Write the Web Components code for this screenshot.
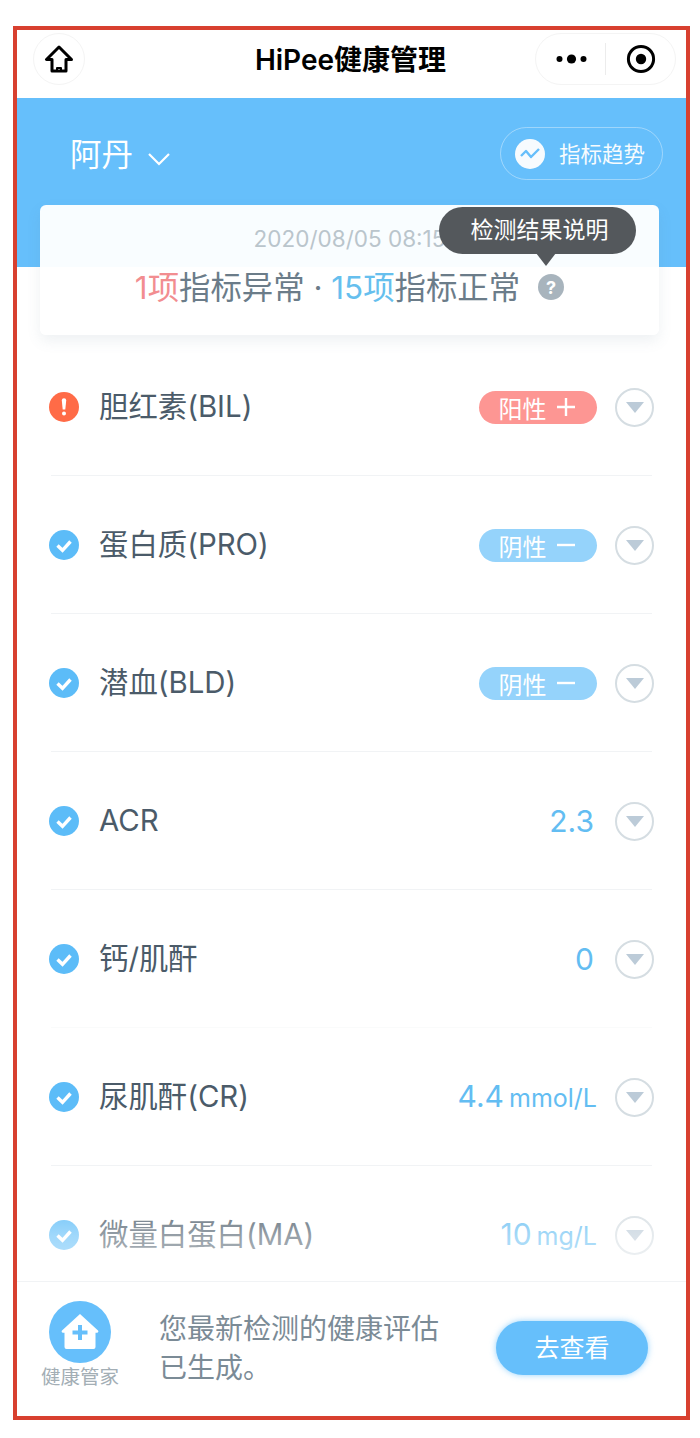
<!DOCTYPE html>
<html lang="zh">
<head>
<meta charset="utf-8">
<title>HiPee健康管理</title>
<style>
html, body { margin: 0; background: #fff; }
body { font-family: Inter, "Noto Sans CJK SC", sans-serif; }
</style>
</head>
<body>
<app-frame>
    <nav-bar slot="top" title-text="HiPee健康管理"></nav-bar>
    <report-hero slot="top" person="阿丹" date="2020/08/05 08:15"></report-hero>

    <indicator-row status="warn" name="胆红素(BIL)"><result-pill kind="pos">阳性</result-pill></indicator-row>
    <indicator-row status="ok" name="蛋白质(PRO)"><result-pill kind="neg">阴性</result-pill></indicator-row>
    <indicator-row status="ok" name="潜血(BLD)"><result-pill kind="neg">阴性</result-pill></indicator-row>
    <indicator-row status="ok" name="ACR" value="2.3"></indicator-row>
    <indicator-row status="ok" name="钙/肌酐" value="0" faint></indicator-row>
    <indicator-row status="ok" name="尿肌酐(CR)" value="4.4" unit="mmol/L"></indicator-row>
    <indicator-row status="ok" name="微量白蛋白(MA)" value="10" unit="mg/L"></indicator-row>

    <report-footer slot="bottom">您最新检测的健康评估<br>已生成。</report-footer>
</app-frame>

<script>
class AppFrame extends HTMLElement {
    constructor() {
        super();
        this.attachShadow({mode: 'open'}).innerHTML = `
<style>
:host {
    display: flex;
    flex-direction: column;
    box-sizing: border-box;
    width: 677px;
    height: 1394px;
    margin: 26px 0 0 13px;
    border: 4px solid #d8402f;
    background: #fff;
    overflow: hidden;
}
.list {
    flex: 1;
    min-height: 0;
    margin-top: 3px;
    overflow: hidden;
    position: relative;
}
/* rows fade out just above the footer */
.fade {
    position: absolute;
    left: 0;
    right: 0;
    bottom: 0;
    height: 90px;
    background: linear-gradient(rgba(255,255,255,0), rgba(255,255,255,.42) 50%, rgba(255,255,255,.65));
    pointer-events: none;
}
</style>
<slot name="top"></slot>
<div class="list"><slot></slot><div class="fade"></div></div>
<slot name="bottom"></slot>`;
    }
}

class NavBar extends HTMLElement {
    connectedCallback() {
        if (this.shadowRoot) return;
        this.attachShadow({mode: 'open'}).innerHTML = `
<style>
:host {
    display: grid;
    grid-template-columns: 1fr auto 1fr;
    align-items: center;
    height: 68px;
    padding: 0 10px 10px 16px;
    box-sizing: border-box;
    color: #000;
}
.home {
    width: 52px;
    height: 52px;
    box-sizing: border-box;
    border: 1px solid #f4f4f4;
    border-radius: 50%;
    display: flex;
    align-items: center;
    justify-content: center;
}
.title { font-size: 28px; font-weight: 600; white-space: nowrap; padding: 0 8px 3px 0; }
.capsule {
    justify-self: end;
    width: 141px;
    height: 52px;
    box-sizing: border-box;
    border: 1px solid #f4f4f4;
    border-radius: 26px;
    display: flex;
    align-items: center;
}
.capsule > div { flex: 1; display: flex; align-items: center; justify-content: center; }
.line { width: 1px; height: 32px; background: #ececec; flex: none !important; }
</style>
<div><div class="home">
    <svg width="30" height="28" viewBox="0 0 30 28" fill="none" stroke="#000" stroke-width="3" stroke-linejoin="round">
        <path d="M15 2 2.5 14.5H8V26h14V14.5h5.5Z"/>
        <path d="M13 26v-3h4v3" stroke-width="2"/>
    </svg>
</div></div>
<div class="title">${this.getAttribute('title-text')}</div>
<div class="capsule">
    <div><svg width="32" height="12" viewBox="0 0 32 12" fill="#000"><circle cx="4.5" cy="6" r="3"/><circle cx="16.5" cy="6" r="4.6"/><circle cx="28.5" cy="6" r="3"/></svg></div>
    <div class="line"></div>
    <div><svg width="30" height="30" viewBox="0 0 30 30"><circle cx="15" cy="15" r="12.6" fill="none" stroke="#000" stroke-width="3"/><circle cx="15" cy="15" r="5.2" fill="#000"/></svg></div>
</div>`;
    }
}

class ReportHero extends HTMLElement {
    connectedCallback() {
        if (this.shadowRoot) return;
        this.attachShadow({mode: 'open'}).innerHTML = `
<style>
:host {
    display: block;
    padding: 29px 23px 0 23px;
    background: linear-gradient(#66bffb 169px, #fff 169px);
}
.head {
    display: flex;
    align-items: center;
    justify-content: space-between;
    height: 53px;
    margin-bottom: 25px;
}
.person {
    display: flex;
    align-items: center;
    gap: 14px;
    margin-left: 30px;
    padding-bottom: 4px;
    color: #fff;
    font-size: 31.5px;
}
.trend {
    width: 163px;
    height: 53px;
    box-sizing: border-box;
    border: 1px solid rgba(255,255,255,.4);
    border-radius: 27px;
    display: flex;
    align-items: center;
    gap: 14px;
    padding-left: 14px;
    color: #fff;
    font-size: 21.5px;
    opacity: .95;
}
.trend span { margin-bottom: 3px; white-space: nowrap; }
.card {
    position: relative;
    height: 130px;
    margin-right: 4px;
    border-radius: 6px;
    background: rgba(255,255,255,.96);
    box-shadow: 0 6px 14px rgba(90,120,140,.1);
    text-align: center;
}
.date { padding-top: 20px; line-height: 28px; font-size: 22.5px; color: #bac5cc; }
.sum {
    display: flex;
    justify-content: center;
    align-items: center;
    margin-top: 14px;
    line-height: 42px;
    font-size: 31.4px;
    color: #6b7c89;
    white-space: pre;
}
.red { color: #f28d90; }
.blue { color: #66bfee; }
.help { margin: 0 0 2px 18px; }
.tip {
    position: absolute;
    left: 399px;
    top: 2px;
    width: 197px;
    height: 47px;
    padding-left: 4px;
    box-sizing: border-box;
    border-radius: 24px;
    background: #54585c;
    color: #fff;
    font-size: 23px;
    line-height: 47px;
}
.tip::after {
    content: "";
    position: absolute;
    left: 97px;
    top: 46px;
    border: 10px solid transparent;
    border-top: 13px solid #54585c;
    border-bottom: 0;
}
</style>
<div class="head">
    <div class="person">${this.getAttribute('person')}
        <svg width="24" height="14" viewBox="0 0 24 14" fill="none" stroke="#fff" stroke-width="2.2" style="margin-top:14px"><path d="M2 2l10 10L22 2"/></svg>
    </div>
    <div class="trend">
        <svg width="30" height="30" viewBox="0 0 30 30"><circle cx="15" cy="15" r="15" fill="#fff"/><path d="M6 17l5-5 5 6 8-8" fill="none" stroke="#66bffb" stroke-width="2.4" stroke-linejoin="round"/></svg>
        <span>指标趋势</span>
    </div>
</div>
<div class="card">
    <div class="date">${this.getAttribute('date')}</div>
    <div class="sum"><span class="red">1项</span>指标异常 · <span class="blue">15项</span>指标正常<svg class="help" width="26" height="26" viewBox="0 0 26 26"><circle cx="13" cy="13" r="13" fill="#a8b4bd"/><text x="13" y="19.5" font-size="18" font-weight="700" text-anchor="middle" fill="#fff" font-family="Inter, sans-serif">?</text></svg></div>
    <div class="tip">检测结果说明</div>
</div>`;
    }
}

class ResultPill extends HTMLElement {
    connectedCallback() {
        if (this.shadowRoot) return;
        const pos = this.getAttribute('kind') === 'pos';
        this.attachShadow({mode: 'open'}).innerHTML = `
<style>
:host {
    display: flex;
    align-items: center;
    justify-content: center;
    gap: 10px;
    width: 118px;
    height: 33px;
    padding-right: 3px;
    box-sizing: border-box;
    border-radius: 17px;
    background: ${pos ? '#fd9693' : '#95d3fb'};
    color: #fff;
    font-size: 24px;
}
</style>
<slot></slot>
<svg width="18" height="18" viewBox="0 0 18 18" stroke="#fff" stroke-width="2.4"><path d="M0 9h18${pos ? 'M9 0v18' : ''}"/></svg>`;
    }
}

class IndicatorRow extends HTMLElement {
    connectedCallback() {
        if (this.shadowRoot) return;
        const warn = this.getAttribute('status') === 'warn';
        const value = this.getAttribute('value');
        const unit = this.getAttribute('unit');
        const line = this.hasAttribute('faint') ? '#fafbfb' : '#f1f3f5';
        const icon = warn
            ? `<circle cx="15" cy="15" r="15" fill="#ff6b47"/><path d="M12.8 8.5a2.2 2.2 0 0 1 4.4 0L16.3 17.5h-2.6Z" fill="#fff"/><circle cx="15" cy="21.5" r="2" fill="#fff"/>`
            : `<circle cx="15" cy="15" r="15" fill="#5cbcf8"/><path d="M8.5 15.5l5 4.8 8-8.8" fill="none" stroke="#fff" stroke-width="3.4"/>`;
        this.attachShadow({mode: 'open'}).innerHTML = `
<style>
:host {
    display: block;
    height: 138px;
    padding: 0 34px;
    box-sizing: border-box;
}
.row {
    display: flex;
    align-items: center;
    height: 138px;
    padding-top: 1px;
    box-sizing: border-box;
    border-bottom: 1px solid ${line};
}
.status { margin-left: -2px; flex: none; }
.name { flex: 1; margin-left: 20px; line-height: 40px; font-size: 29.4px; color: #4b5b69; white-space: nowrap; }
.value { font-size: 30px; line-height: 40px; color: #63bdf2; white-space: nowrap; padding-right: ${unit ? 0 : 3}px; }
.unit { font-size: 25px; margin-left: 5px; }
.more {
    flex: none;
    width: 39px;
    height: 39px;
    box-sizing: border-box;
    margin: 0 -2px 0 18px;
    border: 2px solid #d5dde2;
    border-radius: 50%;
    display: flex;
    align-items: center;
    justify-content: center;
}
</style>
<div class="row">
    <svg class="status" width="30" height="30" viewBox="0 0 30 30">${icon}</svg>
    <div class="name">${this.getAttribute('name')}</div>
    <slot>${value !== null ? `<div class="value">${value}${unit ? `<span class="unit">${unit}</span>` : ''}</div>` : ''}</slot>
    <div class="more"><svg width="18" height="11" viewBox="0 0 18 11"><path d="M0 0h18L9 11Z" fill="#bccbd8"/></svg></div>
</div>`;
    }
}

class ReportFooter extends HTMLElement {
    connectedCallback() {
        if (this.shadowRoot) return;
        this.attachShadow({mode: 'open'}).innerHTML = `
<style>
:host {
    display: flex;
    align-items: flex-start;
    height: 135px;
    box-sizing: border-box;
    border-top: 1px solid #f1f3f5;
    padding: 19px 38px 0 23px;
    background: #fff;
}
.keeper { width: 80px; flex: none; text-align: center; color: #a3aeb5; font-size: 19.5px; line-height: 24px; white-space: nowrap; }
.keeper svg { display: block; margin: 0 auto 2px; }
.msg { flex: 1; margin: 9px 0 0 39px; font-size: 28px; line-height: 39px; color: #7b8b96; white-space: nowrap; }
.go {
    width: 152px;
    height: 54px;
    margin-top: 20px;
    border-radius: 27px;
    background: #66bffb;
    box-shadow: 0 0 6px rgba(102,191,251,.7);
    color: #fff;
    font-size: 25px;
    line-height: 54px;
    text-align: center;
    flex: none;
}
</style>
<div class="keeper">
    <svg width="62" height="62" viewBox="0 0 62 62">
        <circle cx="31" cy="31" r="31" fill="#66bffb"/>
        <path d="M31 13 13 29.5a1.3 1.3 0 0 0 1 2.2h1.5V46a2 2 0 0 0 2 2h27a2 2 0 0 0 2-2V31.7h1.5a1.3 1.3 0 0 0 1-2.2Z" fill="#fff"/>
        <path d="M31 24v15M23.5 31.5h15" stroke="#66bffb" stroke-width="4"/>
    </svg>
    健康管家
</div>
<div class="msg"><slot></slot></div>
<div class="go">去查看</div>`;
    }
}

customElements.define('app-frame', AppFrame);
customElements.define('nav-bar', NavBar);
customElements.define('report-hero', ReportHero);
customElements.define('result-pill', ResultPill);
customElements.define('indicator-row', IndicatorRow);
customElements.define('report-footer', ReportFooter);
</script>
</body>
</html>
